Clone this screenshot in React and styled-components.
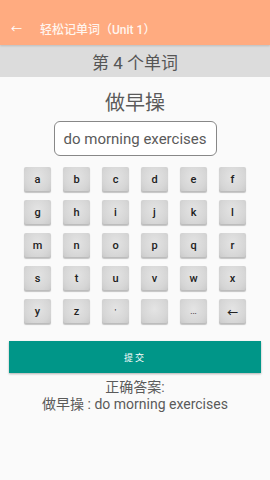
import React from 'react'
import styled, { createGlobalStyle } from 'styled-components'

const Global = createGlobalStyle`
  html, body {
    margin: 0;
    padding: 0;
    background: #fafafa;
    font-family: Roboto, "Noto Sans CJK SC", sans-serif;
  }
`

const Screen = styled.div`
  width: 270px;
  height: 480px;
  display: flex;
  flex-direction: column;
  background: #fafafa;
  overflow: hidden;
`

const AppBar = styled.div`
  height: 45px;
  background: #ffab80;
  display: flex;
  align-items: flex-end;
  box-sizing: border-box;
  padding: 0 0 6px 11px;
  color: #fff;
  box-shadow: 0 1px 2px rgba(0, 0, 0, 0.15);
  position: relative;
  z-index: 1;
`

const Back = styled.span`
  font-size: 11px;
  width: 29px;
  line-height: 18px;
`

const Title = styled.span`
  font-size: 12px;
  line-height: 18px;
  font-weight: 500;
  color: #fff5ee;
`

const Counter = styled.div`
  height: 32px;
  background: #dcdcdc;
  color: #555;
  font-size: 17px;
  display: flex;
  align-items: center;
  justify-content: center;
`

const Word = styled.div`
  margin-top: 13px;
  text-align: center;
  font-size: 20px;
  color: #5a5a5a;
  line-height: 26px;
`

const AnswerBox = styled.div`
  align-self: center;
  margin-top: 5px;
  width: 163px;
  height: 35px;
  box-sizing: border-box;
  border: 1px solid #888;
  border-radius: 6px;
  display: flex;
  align-items: center;
  justify-content: center;
  font-size: 15px;
  color: #5a5a5a;
  background: #fff;
`

const Keyboard = styled.div`
  margin: 11px 0 0 24px;
  display: grid;
  grid-template-columns: repeat(6, 27px);
  grid-auto-rows: 25px;
  column-gap: 12px;
  row-gap: 8px;
`

const Key = styled.div`
  background: radial-gradient(ellipse at 50% 40%, #e4e4e4 0%, #d6d6d6 65%, #c8c8c8 100%);
  border-radius: 2px;
  box-shadow: 0 1px 1px rgba(0, 0, 0, 0.22), inset 0 -1px 0 #bcbcbc;
  display: flex;
  align-items: center;
  justify-content: center;
  font-size: ${({ small }) => (small ? '8px' : '11px')};
  font-weight: 500;
  color: #222;
`

const Submit = styled.div`
  margin: 17px 9px 0;
  height: 32px;
  background: #009688;
  color: #fff;
  font-size: 9px;
  letter-spacing: 2px;
  display: flex;
  align-items: center;
  justify-content: center;
  box-shadow: 0 1px 2px rgba(0, 0, 0, 0.3);
`

const Result = styled.div`
  margin-top: 6px;
  text-align: center;
  color: #5a5a5a;
  font-size: 14px;
  line-height: 17px;
`

const keys = [
  'a', 'b', 'c', 'd', 'e', 'f',
  'g', 'h', 'i', 'j', 'k', 'l',
  'm', 'n', 'o', 'p', 'q', 'r',
  's', 't', 'u', 'v', 'w', 'x',
  'y', 'z', "'", ' ', '...', '←',
]

export default function App() {
  return (
    <Screen>
      <Global />
      <AppBar>
        <Back>←</Back>
        <Title>轻松记单词（Unit 1）</Title>
      </AppBar>
      <Counter>第 4 个单词</Counter>
      <Word>做早操</Word>
      <AnswerBox>do morning exercises</AnswerBox>
      <Keyboard>
        {keys.map((k, i) => (
          <Key key={i} small={k === '...' || k === "'"}>{k}</Key>
        ))}
      </Keyboard>
      <Submit>提交</Submit>
      <Result>
        正确答案:
        <br />
        做早操 : do morning exercises
      </Result>
    </Screen>
  )
}
